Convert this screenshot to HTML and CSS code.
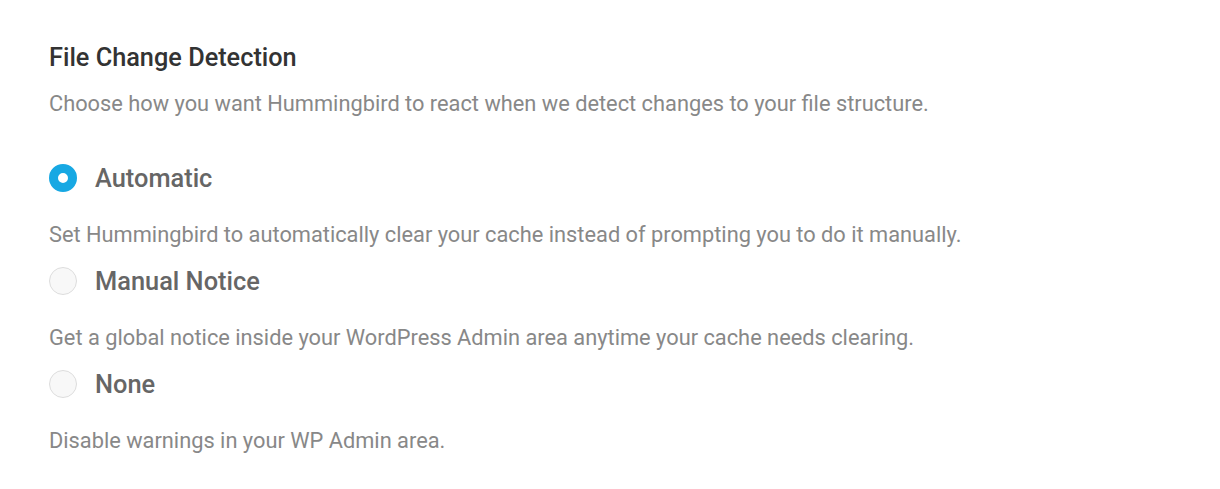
FILE: index.html
```html
<!DOCTYPE html>
<html lang="en">
<head>
    <meta charset="UTF-8">
    <title>File Change Detection</title>
    <link rel="stylesheet" href="styles.css">
</head>
<body>
<div class="settings-box">
    <h3 class="box-title">File Change Detection</h3>
    <p class="box-desc">Choose how you want Hummingbird to react when we detect changes to your file structure.</p>

    <div class="options">
        <div class="option">
            <label class="radio-label">
                <span class="radio checked"></span>
                <span class="radio-text">Automatic</span>
            </label>
            <p class="option-desc">Set Hummingbird to automatically clear your cache instead of prompting you to do it manually.</p>
        </div>
        <div class="option">
            <label class="radio-label">
                <span class="radio"></span>
                <span class="radio-text">Manual Notice</span>
            </label>
            <p class="option-desc">Get a global notice inside your WordPress Admin area anytime your cache needs clearing.</p>
        </div>
        <div class="option">
            <label class="radio-label">
                <span class="radio"></span>
                <span class="radio-text">None</span>
            </label>
            <p class="option-desc">Disable warnings in your WP Admin area.</p>
        </div>
    </div>
</div>
</body>
</html>
```

FILE: styles.css
```css
body {
    font-family: Roboto, "Noto Sans", Arial, sans-serif;
    margin: 0;
    background-color: #fff;
}
.settings-box {
    padding: 43px 49px;
}
.box-title {
    margin: 0;
    font-size: 25.3px;
    font-weight: 500;
    line-height: 30px;
    color: #333;
}
.box-desc {
    margin: 16px 0 0;
    font-size: 21.8px;
    line-height: 30px;
    color: #888;
}
.options {
    margin-top: 44px;
}
.radio-label {
    display: flex;
    align-items: center;
    gap: 18px;
}
.radio {
    box-sizing: border-box;
    width: 28px;
    height: 28px;
    border-radius: 50%;
    background-color: #f8f8f8;
    border: 1px solid #ddd;
    flex-shrink: 0;
}
.radio.checked {
    border: 9px solid #17a8e3;
    background-color: #fff;
}
.radio-text {
    font-size: 25.4px;
    font-weight: 500;
    line-height: 30px;
    color: #666;
}
.option-desc {
    margin: 27px 0 0;
    font-size: 21.8px;
    line-height: 30px;
    color: #888;
}
.option + .option {
    margin-top: 16px;
}
```
